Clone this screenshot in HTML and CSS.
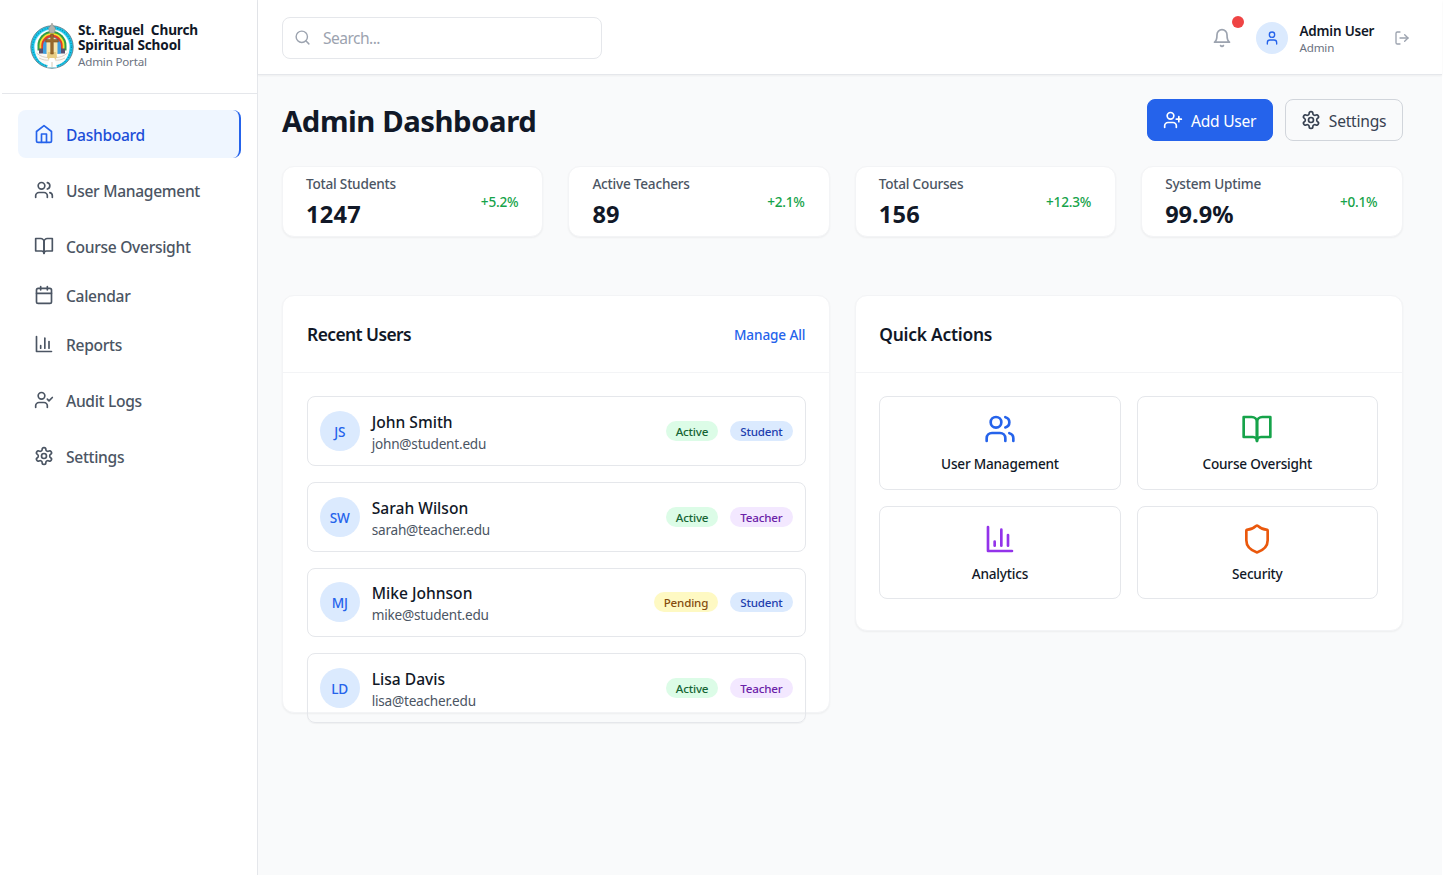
FILE: index.html
```html
<!DOCTYPE html>
<html lang="en">
<head>
<meta charset="utf-8">
<title>Admin Dashboard</title>
<link rel="stylesheet" href="styles.css">
</head>
<body>
<svg class="sprite" aria-hidden="true">
  <symbol id="home" viewBox="0 0 24 24"><path d="m3 9 9-7 9 7v11a2 2 0 0 1-2 2H5a2 2 0 0 1-2-2z"/><path d="M9 22V12h6v10"/></symbol>
  <symbol id="users" viewBox="0 0 24 24"><path d="M16 21v-2a4 4 0 0 0-4-4H6a4 4 0 0 0-4 4v2"/><circle cx="9" cy="7" r="4"/><path d="M22 21v-2a4 4 0 0 0-3-3.87"/><path d="M16 3.13a4 4 0 0 1 0 7.75"/></symbol>
  <symbol id="book" viewBox="0 0 24 24"><path d="M2 3h6a4 4 0 0 1 4 4v14a3 3 0 0 0-3-3H2z"/><path d="M22 3h-6a4 4 0 0 0-4 4v14a3 3 0 0 1 3-3h7z"/></symbol>
  <symbol id="calendar" viewBox="0 0 24 24"><path d="M8 2v4"/><path d="M16 2v4"/><rect x="3" y="4" width="18" height="18" rx="2"/><path d="M3 10h18"/></symbol>
  <symbol id="chart" viewBox="0 0 24 24"><path d="M3 3v18h18"/><path d="M18 17V9"/><path d="M13 17V5"/><path d="M8 17v-3"/></symbol>
  <symbol id="user-check" viewBox="0 0 24 24"><path d="M16 21v-2a4 4 0 0 0-4-4H6a4 4 0 0 0-4 4v2"/><circle cx="9" cy="7" r="4"/><path d="m16 11 2 2 4-4"/></symbol>
  <symbol id="user-plus" viewBox="0 0 24 24"><path d="M16 21v-2a4 4 0 0 0-4-4H6a4 4 0 0 0-4 4v2"/><circle cx="9" cy="7" r="4"/><path d="M19 8v6"/><path d="M22 11h-6"/></symbol>
  <symbol id="user" viewBox="0 0 24 24"><path d="M19 21v-2a4 4 0 0 0-4-4H9a4 4 0 0 0-4 4v2"/><circle cx="12" cy="7" r="4"/></symbol>
  <symbol id="gear" viewBox="0 0 24 24"><path d="M12.22 2h-.44a2 2 0 0 0-2 2v.18a2 2 0 0 1-1 1.73l-.43.25a2 2 0 0 1-2 0l-.15-.08a2 2 0 0 0-2.73.73l-.22.38a2 2 0 0 0 .73 2.73l.15.1a2 2 0 0 1 1 1.72v.51a2 2 0 0 1-1 1.74l-.15.09a2 2 0 0 0-.73 2.73l.22.38a2 2 0 0 0 2.73.73l.15-.08a2 2 0 0 1 2 0l.43.25a2 2 0 0 1 1 1.73V20a2 2 0 0 0 2 2h.44a2 2 0 0 0 2-2v-.18a2 2 0 0 1 1-1.73l.43-.25a2 2 0 0 1 2 0l.15.08a2 2 0 0 0 2.73-.73l.22-.39a2 2 0 0 0-.73-2.73l-.15-.08a2 2 0 0 1-1-1.74v-.5a2 2 0 0 1 1-1.74l.15-.09a2 2 0 0 0 .73-2.73l-.22-.38a2 2 0 0 0-2.73-.73l-.15.08a2 2 0 0 1-2 0l-.43-.25a2 2 0 0 1-1-1.73V4a2 2 0 0 0-2-2z"/><circle cx="12" cy="12" r="3"/></symbol>
  <symbol id="bell" viewBox="0 0 24 24"><path d="M6 8a6 6 0 0 1 12 0c0 7 3 9 3 9H3s3-2 3-9"/><path d="M10.3 21a1.94 1.94 0 0 0 3.4 0"/></symbol>
  <symbol id="logout" viewBox="0 0 24 24"><path d="M9 21H5a2 2 0 0 1-2-2V5a2 2 0 0 1 2-2h4"/><path d="m16 17 5-5-5-5"/><path d="M21 12H9"/></symbol>
  <symbol id="search" viewBox="0 0 24 24"><circle cx="11" cy="11" r="8"/><path d="m21 21-4.3-4.3"/></symbol>
  <symbol id="shield" viewBox="0 0 24 24"><path d="M20 13c0 5-3.5 7.5-7.66 8.95a1 1 0 0 1-.67-.01C7.5 20.5 4 18 4 13V6a1 1 0 0 1 1-1c2 0 4.5-1.2 6.24-2.72a1.17 1.17 0 0 1 1.52 0C14.51 3.81 17 5 19 5a1 1 0 0 1 1 1z"/></symbol>
</svg>

<div class="app">
  <aside class="sidebar">
    <div class="brand">
      <svg class="logo" viewBox="0 0 44 48">
        <circle cx="22" cy="25" r="21.200" fill="#18c6ec" stroke="#5f7c88" stroke-width=".9"/>
        <circle cx="22" cy="25" r="19.400" fill="none" stroke="#1287a0" stroke-width="1.100" stroke-dasharray="1 1.600"/>
        <circle cx="22" cy="25" r="17.400" fill="#fff" stroke="#d9f5fb" stroke-width=".6"/>
        <path d="M7.500 23.500a14.500 14.500 0 0 1 29 0v5h-29z" fill="#2f9e46"/>
        <path d="M9.500 23.500a12.500 12.500 0 0 1 25 0v5h-25z" fill="#f7e030"/>
        <path d="M11.300 23.500a10.700 10.700 0 0 1 21.400 0v7H11.300z" fill="#df3b2c"/>
        <path d="M13 24a9 9 0 0 1 18 0v10H13z" fill="#3f9fe0"/>
        <path d="M16.500 18.500a6.500 6.500 0 0 1 11 0V36h-11z" fill="#f8e6ae"/>
        <path d="M5 27c3 3.500 7 5 12 5l3 11.500C11.500 43 5 36.500 5 27zM39 27c-3 3.500-7 5-12 5l-3 11.500C32.500 43 39 36.500 39 27z" fill="#fbf9f6"/>
        <path d="M6.500 31c4 3.500 8 4.500 11.500 4.500M9 36c4 2 7 2.500 10 2M37.500 31c-4 3.500-8 4.500-11.500 4.500M35 36c-4 2-7 2.500-10 2" fill="none" stroke="#cfc5b8" stroke-width=".8"/>
        <path d="M9 26.500h4v5H9zM31 26.500h4v5h-4z" fill="#57506f"/>
        <path d="M18 30h8l1 5-2 3h-6l-2-3z" fill="#e8cd84"/>
        <path d="M19.500 36l-2.500 9.500h10L24.500 36z" fill="#fff"/>
        <path d="M22 40v5.500" stroke="#c9bda6" stroke-width=".8"/>
        <path d="M20.700 12h2.600v5.500h5v2.600h-5V32h-2.600V20.100h-5v-2.600h5z" fill="#9a6a2e" stroke="#70481d" stroke-width=".5"/>
        <path d="M22 1l1.400 3 2.100 2-1 5h-5l-1-5 2.100-2z" fill="#b3b3ad" stroke="#77776f" stroke-width=".4"/>
      </svg>
      <div class="brand-text">
        <div class="brand-name">St. Raguel&nbsp; Church<br>Spiritual School</div>
        <div class="brand-sub">Admin Portal</div>
      </div>
    </div>
    <nav class="nav">
      <a class="nav-item active"><svg class="icon"><use href="#home"/></svg><span>Dashboard</span></a>
      <a class="nav-item"><svg class="icon"><use href="#users"/></svg><span>User Management</span></a>
      <a class="nav-item"><svg class="icon"><use href="#book"/></svg><span>Course Oversight</span></a>
      <a class="nav-item tight"><svg class="icon"><use href="#calendar"/></svg><span>Calendar</span></a>
      <a class="nav-item tight"><svg class="icon"><use href="#chart"/></svg><span>Reports</span></a>
      <a class="nav-item"><svg class="icon"><use href="#user-check"/></svg><span>Audit Logs</span></a>
      <a class="nav-item"><svg class="icon"><use href="#gear"/></svg><span>Settings</span></a>
    </nav>
  </aside>

  <div class="page">
    <header class="topbar">
      <div class="search"><svg class="icon"><use href="#search"/></svg><span>Search...</span></div>
      <div class="account">
        <div class="bell"><svg class="icon"><use href="#bell"/></svg><i class="dot"></i></div>
        <div class="avatar small"><svg class="icon"><use href="#user"/></svg></div>
        <div class="who">
          <div class="who-name">Admin User</div>
          <div class="who-role">Admin</div>
        </div>
        <svg class="icon logout"><use href="#logout"/></svg>
      </div>
    </header>

    <main class="content">
      <div class="title-row">
        <h1>Admin Dashboard</h1>
        <div class="buttons">
          <a class="btn primary"><svg class="icon"><use href="#user-plus"/></svg><span>Add User</span></a>
          <a class="btn"><svg class="icon"><use href="#gear"/></svg><span>Settings</span></a>
        </div>
      </div>

      <section class="stats">
        <div class="stat"><div><div class="stat-label">Total Students</div><div class="stat-value">1247</div></div><span class="delta">+5.2%</span></div>
        <div class="stat"><div><div class="stat-label">Active Teachers</div><div class="stat-value">89</div></div><span class="delta">+2.1%</span></div>
        <div class="stat"><div><div class="stat-label">Total Courses</div><div class="stat-value">156</div></div><span class="delta">+12.3%</span></div>
        <div class="stat"><div><div class="stat-label">System Uptime</div><div class="stat-value uptime">99.9%</div></div><span class="delta">+0.1%</span></div>
      </section>

      <section class="panels">
        <div class="panel users">
          <div class="panel-head"><h2>Recent Users</h2><a class="manage">Manage All</a></div>
          <div class="user-list">
            <div class="user"><div class="avatar">JS</div><div class="user-text"><div class="user-name">John Smith</div><div class="user-mail">john@student.edu</div></div><span class="badge green">Active</span><span class="badge blue">Student</span></div>
            <div class="user"><div class="avatar">SW</div><div class="user-text"><div class="user-name">Sarah Wilson</div><div class="user-mail">sarah@teacher.edu</div></div><span class="badge green">Active</span><span class="badge purple">Teacher</span></div>
            <div class="user"><div class="avatar">MJ</div><div class="user-text"><div class="user-name">Mike Johnson</div><div class="user-mail">mike@student.edu</div></div><span class="badge yellow">Pending</span><span class="badge blue">Student</span></div>
            <div class="user last"><div class="avatar">LD</div><div class="user-text"><div class="user-name">Lisa Davis</div><div class="user-mail">lisa@teacher.edu</div></div><span class="badge green">Active</span><span class="badge purple">Teacher</span></div>
          </div>
        </div>
        <div class="panel">
          <div class="panel-head"><h2 class="wide">Quick Actions</h2></div>
          <div class="tiles">
            <a class="tile c-blue"><svg class="icon"><use href="#users"/></svg><span>User Management</span></a>
            <a class="tile c-green"><svg class="icon"><use href="#book"/></svg><span>Course Oversight</span></a>
            <a class="tile c-purple"><svg class="icon"><use href="#chart"/></svg><span>Analytics</span></a>
            <a class="tile c-orange"><svg class="icon"><use href="#shield"/></svg><span>Security</span></a>
          </div>
        </div>
      </section>
    </main>
  </div>
</div>
</body>
</html>
```

FILE: styles.css
```css
* { box-sizing: border-box; letter-spacing: -.016em; }
body {
  margin: 0;
  background: #fff;
  color: #111827;
  font-family: "Noto Sans", "Open Sans", sans-serif;
  font-size: 15.6px;
}
h1, h2 { margin: 0; }
.sprite { display: none; }
.icon {
  width: 20px;
  height: 20px;
  flex: none;
  fill: none;
  stroke: currentColor;
  stroke-width: 2;
  stroke-linecap: round;
  stroke-linejoin: round;
}
.app { display: flex; height: 875px; padding: 0 2px; }

/* Sidebar */
.sidebar { width: 256px; border-right: 1px solid #e5e7eb; }
.brand {
  display: flex;
  align-items: flex-start;
  height: 94px;
  padding: 22px 0 0 28px;
  border-bottom: 1px solid #e5e7eb;
}
.logo { width: 44px; height: 48px; }
.brand-text { padding-left: 4px; }
.brand-name { font-size: 13.6px; font-weight: 700; line-height: 15px; letter-spacing: -.01em; }
.brand-sub { margin-top: 2px; color: #6b7280; font-size: 11.6px; line-height: 16px; }
.nav { display: flex; flex-direction: column; padding: 16px; }
.nav-item {
  display: flex;
  align-items: center;
  gap: 12px;
  height: 48px;
  margin-bottom: 8px;
  padding: 0 16px;
  border-radius: 8px;
  color: #4b5563;
  font-weight: 500;
}
.nav-item span { padding-top: 1px; letter-spacing: -.02em; }
.nav-item.tight { margin: -7px 0 8px; }
.nav-item.active { border-right: 2px solid #2563eb; background: #eff6ff; color: #1d4ed8; }
.nav-item.active .icon { color: #2563eb; }

/* Top bar */
.page { flex: 1; min-width: 0; background: #f9fafb; }
.topbar {
  display: flex;
  justify-content: space-between;
  align-items: center;
  height: 75px;
  padding: 1px 32px 0 24px;
  border-bottom: 1px solid #e5e7eb;
  background: #fff;
  box-shadow: 0 1px 2px rgba(0, 0, 0, .05);
}
.search {
  display: flex;
  align-items: center;
  gap: 12px;
  width: 320px;
  height: 42px;
  padding: 0 11px;
  border: 1px solid #e5e7eb;
  border-radius: 8px;
  color: #9ca3af;
}
.search .icon { width: 17px; height: 17px; }
.search span { letter-spacing: -.035em; }
.account { display: flex; align-items: center; }
.bell { position: relative; display: flex; margin-right: 24px; color: #9ca3af; }
.dot {
  position: absolute;
  top: -12px;
  right: -12px;
  width: 12px;
  height: 12px;
  border-radius: 50%;
  background: #ef4444;
}
.avatar {
  display: flex;
  justify-content: center;
  align-items: center;
  flex: none;
  width: 40px;
  height: 40px;
  padding-top: 1px;
  border-radius: 50%;
  background: #dbeafe;
  color: #2563eb;
  font-size: 13.6px;
  font-weight: 500;
}
.avatar.small { width: 32px; height: 32px; padding: 0; }
.avatar.small .icon { width: 16px; height: 16px; }
.who { width: 94.5px; padding: 2px 0 0 12px; }
.who-name { font-size: 13.5px; font-weight: 600; line-height: 18px; white-space: nowrap; }
.who-role { color: #6b7280; font-size: 11.6px; line-height: 16px; }
.logout { width: 16px; height: 16px; margin-left: 12px; color: #9ca3af; }

/* Content */
.content { padding: 24px 39.5px 0 24px; }
.title-row { display: flex; justify-content: space-between; align-items: center; height: 42px; }
h1 { padding-top: 2px; font-size: 29.3px; font-weight: 700; line-height: 36px; letter-spacing: -.015em; }
.buttons { display: flex; gap: 12px; }
.btn {
  display: flex;
  align-items: center;
  gap: 8px;
  height: 42px;
  padding: 0 15.3px;
  border: 1px solid #d1d5db;
  border-radius: 8px;
  color: #374151;
}
.btn span { padding-top: 2px; }
.btn.primary { border-color: #2563eb; background: #2563eb; color: #fff; }
.stats { display: grid; grid-template-columns: repeat(4, 1fr); gap: 25px; margin-top: 25px; }
.stat {
  display: flex;
  justify-content: space-between;
  align-items: center;
  height: 71px;
  padding: 0 24px 0 23px;
  border: 1px solid #f3f4f6;
  border-radius: 12px;
  background: #fff;
  box-shadow: 0 1px 2px rgba(0, 0, 0, .05);
}
.stat-label { color: #4b5563; font-size: 13.6px; font-weight: 500; line-height: 20px; }
.stat-value { margin-top: 4px; font-size: 23.6px; font-weight: 700; line-height: 32px; letter-spacing: .01em; }
.stat-value.uptime { letter-spacing: 0; }
.delta { color: #16a34a; font-size: 13.6px; font-weight: 500; }

/* Panels */
.panels { display: grid; grid-template-columns: 1fr 1fr; align-items: start; gap: 25px; margin-top: 58px; }
.panel {
  height: 336px;
  border: 1px solid #f3f4f6;
  border-radius: 12px;
  background: #fff;
  box-shadow: 0 1px 2px rgba(0, 0, 0, .05);
}
.panel.users { height: 418px; }
.panel-head {
  display: flex;
  justify-content: space-between;
  align-items: center;
  height: 77px;
  padding: 0 23.5px;
  border-bottom: 1px solid #f3f4f6;
}
h2 { padding-left: .5px; font-size: 17.4px; font-weight: 600; letter-spacing: -.032em; }
h2.wide { padding: 0; letter-spacing: -.014em; }
.manage { color: #2563eb; font-size: 13.6px; font-weight: 500; letter-spacing: -.01em; }
.user-list { display: flex; flex-direction: column; gap: 16px; padding: 23.4px 23.2px 0 24px; }
.user {
  display: flex;
  align-items: center;
  height: 69.6px;
  padding: 0 12px 0 11.7px;
  border: 1px solid #e5e7eb;
  border-radius: 8px;
}
.user.last { box-shadow: 0 1px 1px rgba(0, 0, 0, .04); }
.user-text { flex: 1; padding: 1.8px 0 0 12px; }
.user-name { font-weight: 500; line-height: 24px; letter-spacing: 0; }
.user-mail { color: #4b5563; font-size: 13.6px; line-height: 20px; }
.badge {
  height: 20px;
  margin-left: 12px;
  padding: 0 10px;
  border-radius: 10px;
  font-size: 11.6px;
  font-weight: 500;
  line-height: 21px;
}
.badge.green { background: #dcfce7; color: #166534; }
.badge.blue { background: #dbeafe; color: #1e40af; }
.badge.purple { background: #f3e8ff; color: #6b21a8; }
.badge.yellow { background: #fef9c3; color: #854d0e; }
.tiles { display: grid; grid-template-columns: 1fr 1fr; gap: 16px; padding: 23px 23.5px 0; }
.tile {
  display: flex;
  flex-direction: column;
  align-items: center;
  gap: 9px;
  height: 93.5px;
  padding-top: 16px;
  border: 1px solid #e5e7eb;
  border-radius: 8px;
  font-size: 13.6px;
  font-weight: 500;
}
.tile .icon { width: 32px; height: 32px; }
.c-blue .icon { color: #2563eb; }
.c-green .icon { color: #16a34a; }
.c-purple .icon { color: #9333ea; }
.c-orange .icon { color: #ea580c; }
```
